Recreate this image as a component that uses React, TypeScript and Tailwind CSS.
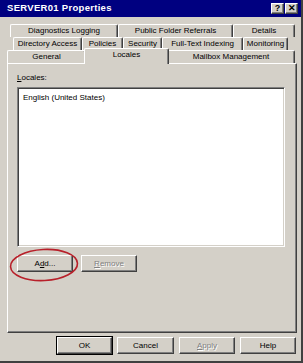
import React from "react";

const raised =
  "border border-t-white border-l-white border-r-[#404040] border-b-[#404040] shadow-[inset_-1px_-1px_0_#808080]";

function Btn({ children, w, disabled, def }: { children: React.ReactNode; w: string; disabled?: boolean; def?: boolean }) {
  return (
    <div className={`${w} h-[17px] ${def ? "outline outline-1 outline-black" : ""} flex-none`}>
      <div className={`h-full w-full ${raised} flex items-center justify-center`}>
        <span className={disabled ? "text-[#808080] [text-shadow:1px_1px_0_#fff]" : ""}>{children}</span>
      </div>
    </div>
  );
}

function Tab({ w, label, sel }: { w: string; label: string; sel?: boolean }) {
  return (
    <div
      className={`${w} flex-none flex items-center justify-center rounded-t-[2px] border-t border-l border-r border-t-white border-l-white border-r-[#404040] shadow-[inset_-1px_0_0_#808080] ${
        sel ? "relative z-10 -mx-[2px] -mt-[2px] h-[16px] -mb-px bg-[#d4d0c8] pb-[3px]" : "h-[13px]"
      }`}
    >
      <span className="leading-none">{label}</span>
    </div>
  );
}

function TitleBtn({ children }: { children: React.ReactNode }) {
  return (
    <div className={`w-[13px] h-[11px] bg-[#d4d0c8] ${raised} flex items-center justify-center text-[9px] font-bold leading-none text-black`}>
      {children}
    </div>
  );
}

export default function App() {
  return (
    <div className="relative w-[303px] h-[363px] overflow-hidden bg-[#d4d0c8] font-['Liberation_Sans',Arial,sans-serif] text-[8px] text-black">
      <div className="flex h-full flex-col border-r-2 border-b-2 border-r-[#404040] border-b-[#404040]">
        {/* title bar */}
        <div className="flex h-[17px] flex-none items-center bg-[#000080] pl-[7px] pr-[3px]">
          <span className="text-[9.5px] font-bold text-white tracking-[0.3px]">SERVER01 Properties</span>
          <div className="ml-auto flex gap-px">
            <TitleBtn>?</TitleBtn>
            <TitleBtn>✕</TitleBtn>
          </div>
        </div>

        {/* tab rows */}
        <div className="mt-[7px] flex flex-col">
          <div className="ml-[10px] flex">
            <Tab w="w-[108px]" label="Diagnostics Logging" />
            <Tab w="w-[115px]" label="Public Folder Referrals" />
            <Tab w="w-[62px]" label="Details" />
          </div>
          <div className="ml-[13px] flex">
            <Tab w="w-[69px]" label="Directory Access" />
            <Tab w="w-[41px]" label="Policies" />
            <Tab w="w-[39px]" label="Security" />
            <Tab w="w-[81px]" label="Full-Text Indexing" />
            <Tab w="w-[45px]" label="Monitoring" />
          </div>
          <div className="ml-[7px] flex items-end">
            <Tab w="w-[79px]" label="General" />
            <Tab w="w-[85px]" label="Locales" sel />
            <Tab w="w-[128px]" label="Mailbox Management" />
          </div>
        </div>

        {/* panel */}
        <div className={`mx-[7px] h-[270px] w-[290px] flex-none ${raised} pl-[9px] pt-[9px]`}>
          <div className="h-[14px] leading-[10px]">
            <span className="underline underline-offset-1">L</span>ocales:
          </div>
          <div className="h-[160px] w-[268px] border border-t-[#808080] border-l-[#808080] border-r-white border-b-white bg-white shadow-[inset_1px_1px_0_#404040,inset_-1px_-1px_0_#d4d0c8] px-[5px] pt-[4px]">
            English (United States)
          </div>
          <div className="mt-[8px] flex gap-[8px]">
            <Btn w="w-[56px]">
              A<span className="underline underline-offset-1">d</span>d...
            </Btn>
            <Btn w="w-[56px]" disabled>
              <span className="underline underline-offset-1">R</span>emove
            </Btn>
          </div>
        </div>

        {/* bottom buttons */}
        <div className="mt-[4px] flex justify-end gap-[5px] pr-[5px]">
          <Btn w="w-[55px]" def>OK</Btn>
          <Btn w="w-[57px]">Cancel</Btn>
          <Btn w="w-[56px]" disabled>
            <span className="underline underline-offset-1">A</span>pply
          </Btn>
          <Btn w="w-[56px]">Help</Btn>
        </div>
      </div>

      {/* red annotation */}
      <svg className="pointer-events-none absolute left-[8px] top-[247px]" width="72" height="37" viewBox="0 0 72 37">
        <ellipse cx="36" cy="18" rx="33.5" ry="15.5" fill="none" stroke="#b8202a" strokeWidth="1.6" transform="rotate(-3 36 18)" />
      </svg>
    </div>
  );
}
